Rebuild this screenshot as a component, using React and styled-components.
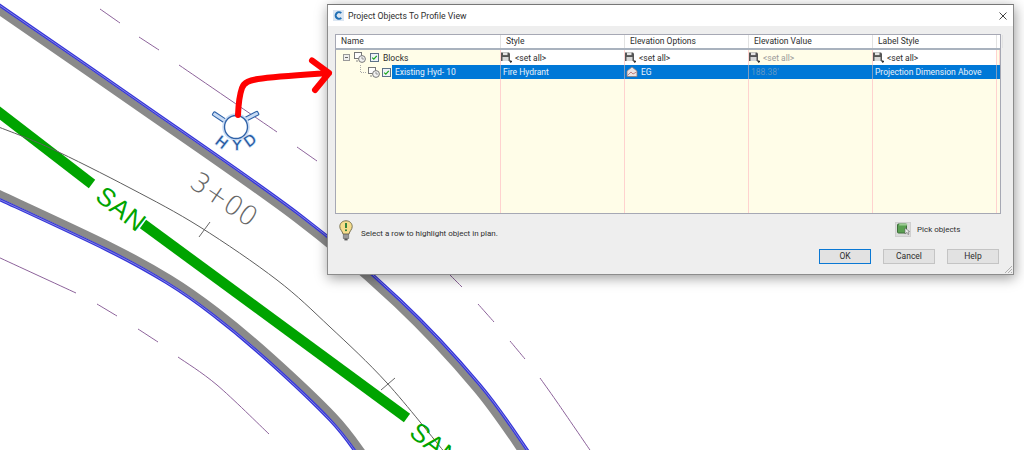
import styled, { createGlobalStyle } from "styled-components";

const GlobalStyle = createGlobalStyle`
  html, body {
    margin: 0;
    padding: 0;
    background: #fff;
    overflow: hidden;
  }
`;

const Stage = styled.div`
  position: relative;
  width: 1024px;
  height: 450px;
  overflow: hidden;
  background: #fff;
  font-family: Roboto, "Liberation Sans", sans-serif;
  font-size: 8.5px;
  color: #2e2e2e;
`;

const Drawing = styled.svg`
  position: absolute;
  inset: 0;
`;

const Dialog = styled.div`
  position: absolute;
  left: 327px;
  top: 4px;
  width: 687px;
  height: 271px;
  box-sizing: border-box;
  border: 1px solid #8c8c8c;
  border-top-color: #777;
  background: #eeeeee;
  box-shadow: 1px 3px 12px rgba(0, 0, 0, 0.4);
  display: flex;
  flex-direction: column;
`;

const TitleBar = styled.div`
  height: 21px;
  flex: none;
  background: #fff;
  display: flex;
  align-items: center;
  padding: 0 6px 0 5px;
  gap: 4px;
`;

const TitleText = styled.span`
  flex: 1;
  font-size: 8.7px;
`;

const Body = styled.div`
  flex: 1;
  display: flex;
  flex-direction: column;
  padding: 8px 12px 11px 7px;
`;

const Table = styled.div`
  height: 180px;
  flex: none;
  box-sizing: border-box;
  border: 1px solid #a6a8b4;
  display: flex;
  flex-direction: column;
  background: #fffde8;
`;

const COLUMNS = "165px 124px 124px 124px 124px 1fr";

const HeaderRow = styled.div`
  display: grid;
  grid-template-columns: ${COLUMNS};
  height: 13px;
  flex: none;
  background: #fff;
  border-bottom: 2px solid #a9b2be;
`;

const HeaderCell = styled.div`
  padding-left: 5px;
  line-height: 13px;
  border-right: 1px solid #e2e2e2;
`;

const Row = styled.div`
  display: grid;
  grid-template-columns: ${COLUMNS};
  height: ${(p) => p.$height || "15px"};
  flex: ${(p) => (p.$fill ? 1 : "none")};
`;

const Cell = styled.div`
  display: flex;
  align-items: center;
  box-sizing: border-box;
  padding-left: ${(p) => p.$indent || "0"};
  gap: ${(p) => p.$gap || "3px"};
  background: ${(p) => p.$bg || "transparent"};
  color: ${(p) => p.$color || "#2e2e2e"};
  border-right: 1px solid ${(p) => p.$line || "#ffd2cf"};
  white-space: nowrap;
`;

const SelectedText = styled.div`
  flex: 1;
  align-self: stretch;
  background: #0078d7;
  color: #e8f2fb;
  display: flex;
  align-items: center;
  padding-left: 3px;
  margin-left: -1px;
`;

const Footer = styled.div`
  display: flex;
  align-items: center;
  height: 27px;
  margin-top: 3px;
  padding-left: 4px;
  flex: none;
  font-size: 8px;
`;

const Hint = styled.span`
  flex: 1;
  margin: 6px 0 0 8px;
`;

const PickButton = styled.div`
  width: 16px;
  height: 15px;
  margin-bottom: 3px;
  background: #dcdcdc;
  border: 1px solid #d0d0d0;
  box-sizing: border-box;
  display: flex;
  align-items: center;
  justify-content: center;
`;

const PickLabel = styled.span`
  width: 44px;
  margin: 0 40px 3px 6px;
`;

const ButtonRow = styled.div`
  display: flex;
  justify-content: flex-end;
  gap: 12px;
  margin-top: 5px;
  margin-right: 2px;
`;

const Button = styled.div`
  width: 52px;
  height: 15px;
  box-sizing: border-box;
  border: 1px solid ${(p) => (p.$primary ? "#0a78d4" : "#c4c4c4")};
  background: #e2e2e2;
  text-align: center;
  line-height: 13px;
`;

const Grip = styled.svg`
  position: absolute;
  right: 0;
  bottom: 0;
`;

const ArrowLayer = styled.svg`
  position: absolute;
  inset: 0;
  pointer-events: none;
`;

// catmull-rom through the picked points, the road edges are all long curves
function smooth(pts) {
  let d = `M${pts[0][0]},${pts[0][1]}`;
  for (let i = 0; i < pts.length - 1; i++) {
    const p0 = pts[i - 1] || pts[i];
    const p1 = pts[i];
    const p2 = pts[i + 1];
    const p3 = pts[i + 2] || p2;
    const c1x = p1[0] + (p2[0] - p0[0]) / 6;
    const c1y = p1[1] + (p2[1] - p0[1]) / 6;
    const c2x = p2[0] - (p3[0] - p1[0]) / 6;
    const c2y = p2[1] - (p3[1] - p1[1]) / 6;
    d += ` C${c1x},${c1y} ${c2x},${c2y} ${p2[0]},${p2[1]}`;
  }
  return d;
}

// shift a line sideways, dist > 0 goes to the lower left of a line running down-right
function offset(pts, dist) {
  return pts.map((p, i) => {
    const a = pts[i - 1] || p;
    const b = pts[i + 1] || p;
    const dx = b[0] - a[0];
    const dy = b[1] - a[1];
    const len = Math.hypot(dx, dy);
    return [p[0] - (dy / len) * dist, p[1] + (dx / len) * dist];
  });
}

const upperBlue = [[-8, 0], [137, 100], [300, 215], [400, 300], [480, 385], [530, 454]];
const lowerBlue = [[-8, 196], [107, 250], [167, 283], [213, 315], [267, 360], [330, 420], [360, 458]];
const center = [[-4, 126], [50, 148], [130, 188], [200, 227], [277, 280], [330, 327], [387, 383], [446, 454]];

const purple = [
  [[100, 9], [120, 23]],
  [[139, 37], [159, 50]],
  [[179, 65], [277, 132]],
  [[297, 147], [317, 161]],
  [[450, 275], [462, 287]],
  [[478, 304], [494, 322]],
  [[510, 341], [525, 359]],
  [[540, 378], [557, 402], [592, 453]],
  [[-2, 257], [76, 293]],
  [[97, 304], [117, 316]],
  [[138, 329], [158, 342]],
  [[178, 357], [217, 385], [269, 434]],
];

const Road = ({ blue, side }) => (
  <g fill="none">
    <path d={smooth(offset(blue, side * 5))} stroke="#8a8a8a" strokeWidth="7.5" />
    <path d={smooth(blue)} stroke="#3535d8" strokeWidth="3.2" />
    <path d={smooth(blue)} stroke="#a8a8e8" strokeWidth="0.7" />
  </g>
);

const HydrantSymbol = () => (
  <g>
    <g fill="#c9dcf5" stroke="#2f62a8" strokeWidth="1.1">
      <rect x="-7" y="-2" width="14" height="4" rx="1" transform="translate(219,117) rotate(33)" />
      <rect x="-7" y="-2" width="14" height="4" rx="1" transform="translate(252,116) rotate(-27)" />
    </g>
    <circle cx="236" cy="127" r="13" fill="none" stroke="#c9dcf5" strokeWidth="1.5" />
    <circle cx="236" cy="127" r="11.5" fill="#fff" stroke="#2f62a8" strokeWidth="1.4" />
    <g
      fontFamily="'DejaVu Sans', 'Liberation Sans', sans-serif"
      fontSize="14.5"
      fill="#24579e"
      stroke="#c3d8f4"
      strokeWidth="1.4"
      paintOrder="stroke"
      textAnchor="middle"
    >
      <text transform="translate(218.6,146.3) rotate(38)">H</text>
      <text transform="translate(237,149.5)">Y</text>
      <text transform="translate(253,144.5) rotate(-36)">D</text>
    </g>
  </g>
);

const SheetDrawing = () => (
  <Drawing width="1024" height="450" viewBox="0 0 1024 450">
    {purple.map((pts, i) => (
      <path key={i} d={smooth(pts)} fill="none" stroke="#8d639b" strokeWidth="1" />
    ))}
    <Road blue={upperBlue} side={1} />
    <Road blue={lowerBlue} side={-1} />
    <g stroke="#00a400" strokeWidth="10.5">
      <line x1="-4" y1="110" x2="92" y2="184" />
      <line x1="143" y1="224" x2="407" y2="418" />
    </g>
    <path d={smooth(center)} fill="none" stroke="#5e5e5e" strokeWidth="1" />
    <g stroke="#666" strokeWidth="1">
      <line x1="210" y1="222" x2="199" y2="237" />
      <line x1="395" y1="378" x2="381" y2="390" />
    </g>
    <text
      transform="translate(219,207) rotate(34)"
      textAnchor="middle"
      fontFamily="'DejaVu Sans', 'Liberation Sans', sans-serif"
      fontWeight="200"
      fontSize="27"
      fill="#666"
    >
      3+00
    </text>
    <g fontFamily="'Liberation Sans', sans-serif" fontSize="26" letterSpacing="0.5" fill="#00a400">
      <text transform="translate(94,199) rotate(38)">SAN</text>
      <text transform="translate(408,435) rotate(38)">SAN</text>
    </g>
    <HydrantSymbol />
  </Drawing>
);

const AppLogo = () => (
  <svg width="11" height="11" viewBox="0 0 12 12">
    <rect width="12" height="12" fill="#dbe6f2" />
    <path d="M9 3.4 A3.6 3.6 0 1 0 9 8.6" fill="none" stroke="#1f6fb5" strokeWidth="2.2" />
  </svg>
);

const CloseIcon = () => (
  <svg width="8" height="8" viewBox="0 0 8 8">
    <path d="M0.5 0.5 L7.5 7.5 M7.5 0.5 L0.5 7.5" stroke="#444" strokeWidth="1" />
  </svg>
);

const Expander = () => (
  <svg width="7" height="7" viewBox="0 0 7 7">
    <rect x="0.5" y="0.5" width="6" height="6" fill="#eee" stroke="#999" />
    <path d="M2 3.5 H5" stroke="#666" />
  </svg>
);

const Elbow = () => (
  <svg width="8" height="14" viewBox="0 0 8 14">
    <path d="M2.5 0 V7.5 H8" fill="none" stroke="#aaa" strokeDasharray="1 1" />
  </svg>
);

const BlockIcon = () => (
  <svg width="12" height="11" viewBox="0 0 12 11">
    <rect x="0.5" y="0.5" width="7" height="6" fill="#fdfdfd" stroke="#777" />
    <path d="M2 9 H4" stroke="#888" />
    <circle cx="8" cy="7" r="3.4" fill="#f2f2f2" stroke="#777" />
    <path d="M8 5 V7 H10" fill="none" stroke="#777" strokeWidth="0.7" />
  </svg>
);

const Check = () => (
  <svg width="9" height="9" viewBox="0 0 9 9">
    <rect x="0.5" y="0.5" width="8" height="8" fill="#eef3f8" stroke="#5d7288" />
    <path d="M2.2 4.6 L3.8 6.2 L6.8 2.8" fill="none" stroke="#1aa81a" strokeWidth="1.2" />
  </svg>
);

const SetAllIcon = () => (
  <svg width="11" height="12" viewBox="0 0 11 12">
    <path d="M0 0.5 H8 L9 1.5 V9 H0 Z" fill="#555" />
    <rect x="2" y="0.5" width="4.5" height="2.6" fill="#e4e4e4" />
    <rect x="1.5" y="5" width="6" height="4" fill="#d8d8d8" />
    <path d="M8.5 9.5 H11 M9.8 8.2 V11" stroke="#333" strokeWidth="1" />
  </svg>
);

const SurfaceIcon = () => (
  <svg width="12" height="12" viewBox="0 0 12 12">
    <path d="M6 1 L11 5 V10.5 H1 V5 Z" fill="#e9e3e3" stroke="#8a7b7b" strokeWidth="0.8" />
    <path d="M1.5 9.5 L5 6 L7 8 L10.5 6" fill="none" stroke="#b06a6a" strokeWidth="0.8" />
  </svg>
);

const BulbIcon = () => (
  <svg width="14" height="21" viewBox="0 0 14 21">
    <path d="M7 0.8 C3 0.8 0.8 3.6 0.8 6.6 C0.8 9.6 3.4 11 4 14 H10 C10.6 11 13.2 9.6 13.2 6.6 C13.2 3.6 11 0.8 7 0.8 Z" fill="#f6dd8c" stroke="#77704f" />
    <rect x="4.2" y="14.5" width="5.6" height="4" fill="#999" stroke="#666" strokeWidth="0.6" />
    <rect x="5.4" y="18.6" width="3.2" height="1.8" fill="#555" />
    <path d="M7 3 V8" stroke="#1f7a33" strokeWidth="1.8" />
    <circle cx="7" cy="10.3" r="1" fill="#1f7a33" />
  </svg>
);

const PickIcon = () => (
  <svg width="13" height="12" viewBox="0 0 13 12">
    <rect x="0.5" y="1" width="9" height="9" rx="1" fill="#5ba052" stroke="#3e6e3a" />
    <rect x="2.2" y="0.5" width="8" height="2" fill="#9ccb93" />
    <path d="M8 5 L8 11 L9.6 9.6 L11 11.6 L12 11 L10.8 9 L12.6 8.6 Z" fill="#eee" stroke="#666" strokeWidth="0.6" />
  </svg>
);

const RedArrow = () => (
  <ArrowLayer width="1024" height="450" viewBox="0 0 1024 450">
    <path
      d="M238 115 C238.5 103 239.5 95 242 88 C244 82 250 80.5 258 79 C275 76.5 300 75 329 73 M312 60.5 L329 73 L315 90"
      fill="none"
      stroke="#ff0000"
      strokeWidth="6"
      strokeLinecap="round"
      strokeLinejoin="round"
    />
  </ArrowLayer>
);

const SELECTED_LINE = "#7f9dbf";

export default function App() {
  return (
    <Stage>
      <GlobalStyle />
      <SheetDrawing />
      <Dialog>
        <TitleBar>
          <AppLogo />
          <TitleText>Project Objects To Profile View</TitleText>
          <CloseIcon />
        </TitleBar>
        <Body>
          <Table>
            <HeaderRow>
              <HeaderCell>Name</HeaderCell>
              <HeaderCell>Style</HeaderCell>
              <HeaderCell>Elevation Options</HeaderCell>
              <HeaderCell>Elevation Value</HeaderCell>
              <HeaderCell>Label Style</HeaderCell>
              <HeaderCell />
            </HeaderRow>
            <Row>
              <Cell $indent="7px" $gap="4px">
                <Expander />
                <BlockIcon />
                <Check />
                <span>Blocks</span>
              </Cell>
              <Cell $bg="#fff">
                <SetAllIcon />
                <span>&lt;set all&gt;</span>
              </Cell>
              <Cell $bg="#fff">
                <SetAllIcon />
                <span>&lt;set all&gt;</span>
              </Cell>
              <Cell $color="#9a9a9a">
                <SetAllIcon />
                <span>&lt;set all&gt;</span>
              </Cell>
              <Cell $bg="#fff">
                <SetAllIcon />
                <span>&lt;set all&gt;</span>
              </Cell>
              <Cell />
            </Row>
            <Row $height="14px">
              <Cell $indent="22px" $gap="2px" $line={SELECTED_LINE}>
                <Elbow />
                <BlockIcon />
                <Check />
                <SelectedText>Existing Hyd- 10</SelectedText>
              </Cell>
              <Cell $bg="#0078d7" $color="#e8f2fb" $indent="2px" $line={SELECTED_LINE}>
                Fire Hydrant
              </Cell>
              <Cell $bg="#0078d7" $color="#e8f2fb" $indent="1px" $line={SELECTED_LINE}>
                <SurfaceIcon />
                <span>EG</span>
              </Cell>
              <Cell $bg="#0078d7" $color="#5f97c6" $indent="2px" $line={SELECTED_LINE}>
                188.38'
              </Cell>
              <Cell $bg="#0078d7" $color="#e8f2fb" $indent="2px" $line={SELECTED_LINE}>
                Projection Dimension Above
              </Cell>
              <Cell $bg="#0078d7" $line="#0078d7" />
            </Row>
            <Row $fill $height="auto">
              <Cell />
              <Cell />
              <Cell />
              <Cell />
              <Cell />
              <Cell $line="transparent" />
            </Row>
          </Table>
          <Footer>
            <BulbIcon />
            <Hint>Select a row to highlight object in plan.</Hint>
            <PickButton>
              <PickIcon />
            </PickButton>
            <PickLabel>Pick objects</PickLabel>
          </Footer>
          <ButtonRow>
            <Button $primary>OK</Button>
            <Button>Cancel</Button>
            <Button>Help</Button>
          </ButtonRow>
        </Body>
        <Grip width="9" height="9" viewBox="0 0 9 9">
          <path d="M8 1 L1 8 M8 4 L4 8 M8 7 L7 8" stroke="#b0b0b0" strokeWidth="1" />
        </Grip>
      </Dialog>
      <RedArrow />
    </Stage>
  );
}
